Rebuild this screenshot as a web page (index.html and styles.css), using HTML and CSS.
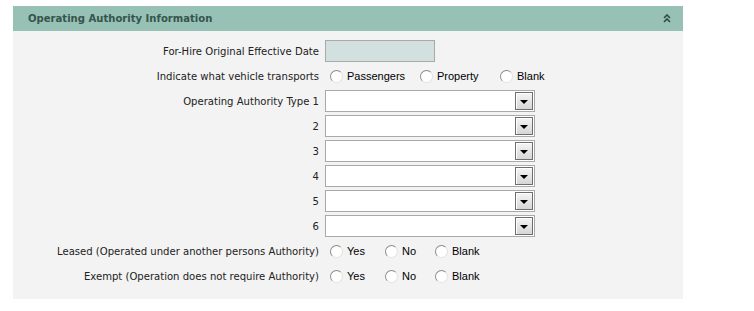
FILE: index.html
```html
<!DOCTYPE html>
<html lang="en">
<head>
  <meta charset="UTF-8">
  <title>Operating Authority Information</title>
  <link rel="stylesheet" href="styles.css">
</head>
<body>
  <div class="panel">
    <div class="panel-header">
      <span class="panel-title">Operating Authority Information</span>
      <svg class="collapse-icon" width="8" height="9" viewBox="0 0 8 9">
        <path d="M1 4 L4 1 L7 4 M1 8 L4 5 L7 8" fill="none" stroke="#2d4d45" stroke-width="1.6"/>
      </svg>
    </div>

    <div class="form-grid">
      <div class="field-label">For-Hire Original Effective Date</div>
      <div class="field"><div class="date-input"></div></div>

      <div class="field-label">Indicate what vehicle transports</div>
      <div class="field">
        <div class="radio-group transports">
          <span class="option"><span class="radio"></span>Passengers</span>
          <span class="option"><span class="radio"></span>Property</span>
          <span class="option"><span class="radio"></span>Blank</span>
        </div>
      </div>

      <div class="field-label">Operating Authority Type 1</div>
      <div class="field"><div class="select"><span class="select-btn"></span></div></div>

      <div class="field-label">2</div>
      <div class="field"><div class="select"><span class="select-btn"></span></div></div>

      <div class="field-label">3</div>
      <div class="field"><div class="select"><span class="select-btn"></span></div></div>

      <div class="field-label">4</div>
      <div class="field"><div class="select"><span class="select-btn"></span></div></div>

      <div class="field-label">5</div>
      <div class="field"><div class="select"><span class="select-btn"></span></div></div>

      <div class="field-label">6</div>
      <div class="field"><div class="select"><span class="select-btn"></span></div></div>

      <div class="field-label">Leased (Operated under another persons Authority)</div>
      <div class="field">
        <div class="radio-group yes-no">
          <span class="option"><span class="radio"></span>Yes</span>
          <span class="option"><span class="radio"></span>No</span>
          <span class="option"><span class="radio"></span>Blank</span>
        </div>
      </div>

      <div class="field-label">Exempt (Operation does not require Authority)</div>
      <div class="field">
        <div class="radio-group yes-no">
          <span class="option"><span class="radio"></span>Yes</span>
          <span class="option"><span class="radio"></span>No</span>
          <span class="option"><span class="radio"></span>Blank</span>
        </div>
      </div>
    </div>
  </div>
</body>
</html>
```

FILE: styles.css
```css
body {
  margin: 6px 0 0 13px;
  background-color: #fff;
  font-family: "DejaVu Sans Condensed", "Liberation Sans", sans-serif;
  font-size: 11.2px;
  color: #222;
}

.panel {
  width: 670px;
  background-color: #f3f3f3;
}

.panel-header {
  display: flex;
  align-items: center;
  justify-content: space-between;
  height: 25px;
  padding: 0 12px 0 15px;
  background-color: #97c1b5;
}

.panel-title {
  font-weight: bold;
  color: #34554c;
}

.collapse-icon {
  display: block;
}

.form-grid {
  display: grid;
  grid-template-columns: 306px 1fr;
  grid-auto-rows: 22px;
  column-gap: 6px;
  row-gap: 3px;
  padding: 9px 0 12px 0;
}

.field-label {
  display: flex;
  align-items: center;
  justify-content: flex-end;
  white-space: nowrap;
}

.field {
  display: flex;
  align-items: center;
}

.date-input {
  box-sizing: border-box;
  width: 110px;
  height: 22px;
  background-color: #d3e0e0;
  border: 1px solid #a9a9a9;
}

.radio-group {
  display: grid;
  align-items: center;
  padding-left: 5px;
  font-family: "Liberation Sans", Arial, sans-serif;
  font-size: 11px;
  color: #000;
}

.transports {
  grid-template-columns: 90px 80px auto;
}

.yes-no {
  grid-template-columns: 55px 50px auto;
}

.option {
  display: flex;
  align-items: center;
  gap: 4px;
}

.radio {
  box-sizing: border-box;
  width: 13px;
  height: 13px;
  border-radius: 50%;
  border: 1px solid;
  border-color: #8c8c8c #e2e2e2 #e2e2e2 #8c8c8c;
  background-color: #fff;
}

.select {
  box-sizing: border-box;
  display: flex;
  justify-content: flex-end;
  width: 210px;
  height: 22px;
  padding: 1px;
  background-color: #fff;
  border: 1px solid #a9a9a9;
}

.select-btn {
  box-sizing: border-box;
  display: flex;
  align-items: center;
  justify-content: center;
  width: 18px;
  border: 1px solid #6e6e6e;
  box-shadow: inset 1px 1px 0 #fff;
  background: linear-gradient(#f5f5f5, #d6d6d6);
}

.select-btn::after {
  content: "";
  border-left: 4px solid transparent;
  border-right: 4px solid transparent;
  border-top: 4px solid #000;
  margin-top: 1px;
}
```
